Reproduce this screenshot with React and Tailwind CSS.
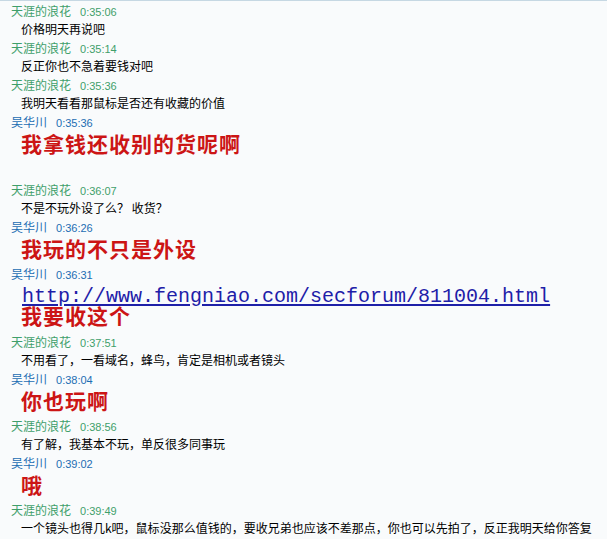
import React from "react";

const GREEN = "text-[#3f9f6b]";
const BLUE = "text-[#1c6db3]";

function Header({ name, time, me }) {
  return (
    <div className={`h-[17px] leading-[17px] pl-[11px] flex items-baseline whitespace-nowrap ${me ? BLUE : GREEN}`}>
      <span className="text-[12px]">{name}</span>
      <span className="ml-[9px] text-[11px] font-['Liberation_Sans',sans-serif]">{time}</span>
    </div>
  );
}

function Small({ name, time, text }) {
  return (
    <div>
      <Header name={name} time={time} />
      <div className="h-[20px] pt-[1px] leading-[17px] pl-[21px] text-[12px] text-black whitespace-nowrap">{text}</div>
    </div>
  );
}

function Big({ time, text, extra }) {
  return (
    <div>
      <Header name="吴华川" time={time} me />
      <div className="h-[30px] leading-[26px] pl-[21px] text-[21px] tracking-[1px] font-bold text-[#cc1515] whitespace-nowrap">{text}</div>
      {extra && <div className="h-[21px]" />}
    </div>
  );
}

export default function App() {
  return (
    <div className="w-[607px] h-[539px] overflow-hidden bg-[#f9fbfc] border-t border-[#c6d8e3] pt-[1px] font-['Noto_Sans_CJK_SC',sans-serif]">
      <Small name="天涯的浪花" time="0:35:06" text="价格明天再说吧" />
      <Small name="天涯的浪花" time="0:35:14" text="反正你也不急着要钱对吧" />
      <Small name="天涯的浪花" time="0:35:36" text="我明天看看那鼠标是否还有收藏的价值" />
      <Big time="0:35:36" text="我拿钱还收别的货呢啊" extra />
      <Small name="天涯的浪花" time="0:36:07" text="不是不玩外设了么？ 收货？" />
      <Big time="0:36:26" text="我玩的不只是外设" />
      <div>
        <Header name="吴华川" time="0:36:31" me />
        <div className="h-[51px]">
          <div className="h-[24px] leading-[26px] pl-[22px] whitespace-nowrap">
            <a className="text-[20px] font-normal font-['Liberation_Mono',monospace] text-[#1e20a8] underline underline-offset-[2px]">
              http://www.fengniao.com/secforum/811004.html
            </a>
          </div>
          <div className="h-[21px] leading-[19px] pl-[21px] text-[21px] tracking-[1px] font-bold text-[#cc1515] whitespace-nowrap">我要收这个</div>
        </div>
      </div>
      <Small name="天涯的浪花" time="0:37:51" text="不用看了，一看域名，蜂鸟，肯定是相机或者镜头" />
      <Big time="0:38:04" text="你也玩啊" />
      <Small name="天涯的浪花" time="0:38:56" text="有了解，我基本不玩，单反很多同事玩" />
      <Big time="0:39:02" text="哦" />
      <Small
        name="天涯的浪花"
        time="0:39:49"
        text="一个镜头也得几k吧，鼠标没那么值钱的，要收兄弟也应该不差那点，你也可以先拍了，反正我明天给你答复"
      />
    </div>
  );
}
